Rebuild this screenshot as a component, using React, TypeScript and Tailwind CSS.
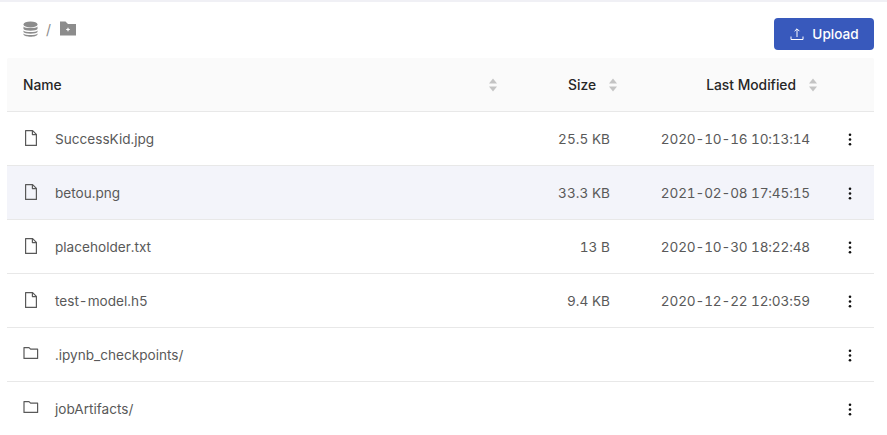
const rows = [
  { name: "SuccessKid.jpg", size: "25.5 KB", date: "2020-10-16 10:13:14", type: "file" },
  { name: "betou.png", size: "33.3 KB", date: "2021-02-08 17:45:15", type: "file", hover: true },
  { name: "placeholder.txt", size: "13 B", date: "2020-10-30 18:22:48", type: "file" },
  { name: "test-model.h5", size: "9.4 KB", date: "2020-12-22 12:03:59", type: "file" },
  { name: ".ipynb_checkpoints/", size: "", date: "", type: "folder" },
  { name: "jobArtifacts/", size: "", date: "", type: "folder" },
];

function SortIcon() {
  return (
    <svg width="10" height="14" viewBox="0 0 10 14" className="shrink-0">
      <path d="M5 0.5 L9 5.5 H1 Z" fill="#c4c4c4" />
      <path d="M5 13.5 L9 8.5 H1 Z" fill="#c4c4c4" />
    </svg>
  );
}

function FileIcon() {
  return (
    <svg width="16" height="18" viewBox="0 0 16 18" fill="none" stroke="#595959" strokeWidth="1.2" strokeLinejoin="round" className="shrink-0">
      <path d="M2.6 1.6 H9.6 L13.4 5.4 V16.4 H2.6 Z" />
      <path d="M9.4 1.6 V5.6 H13.4" />
    </svg>
  );
}

function FolderIcon() {
  return (
    <svg width="16" height="14" viewBox="0 0 16 14" fill="none" stroke="#595959" strokeWidth="1.2" strokeLinejoin="round" className="mb-[2px] shrink-0">
      <path d="M1 1.6 H6 L7.6 3.2 H14.6 V12.4 H1 Z" />
    </svg>
  );
}

function Dots() {
  return (
    <svg width="4" height="13" viewBox="0 0 4 13" fill="#111" className="mt-[2px] shrink-0">
      <circle cx="2" cy="1.8" r="1.3" />
      <circle cx="2" cy="6.5" r="1.3" />
      <circle cx="2" cy="11.2" r="1.3" />
    </svg>
  );
}

export default function App() {
  return (
    <div className="h-[435px] w-[887px] overflow-hidden bg-white font-['Inter',sans-serif] text-[13.6px]">
      <div className="h-[2px] bg-[#f0f0f5]" />
      <div className="flex h-[56px] items-start justify-between pl-[23px] pr-[13px]">
        <div className="mt-[19px] flex items-center gap-[8px] text-[#8c8c8c]">
          <svg width="15" height="17" viewBox="0 0 15 17" fill="#8c8c8c">
            <ellipse cx="7.5" cy="3.4" rx="7" ry="3" />
            <path d="M0.5 5.4 C1.5 7.4 13.5 7.4 14.5 5.4 V8 C13.5 10.2 1.5 10.2 0.5 8 Z" />
            <path d="M0.5 9.4 C1.5 11.4 13.5 11.4 14.5 9.4 V11 C13.5 13.2 1.5 13.2 0.5 11 Z" />
            <path d="M0.5 12.4 C1.5 14.4 13.5 14.4 14.5 12.4 V13.6 C13.5 16.6 1.5 16.6 0.5 13.6 Z" />
          </svg>
          <span className="text-sm leading-none">/</span>
          <svg width="16" height="15" viewBox="0 0 16 15" className="mb-[2px] ml-[1px]">
            <path d="M0 0.5 H5.5 L8 3 H16 V14.5 H0 Z" fill="#8c8c8c" />
            <path d="M6.2 8.5 H9.8 M8 6.7 V10.3" stroke="#fff" strokeWidth="1.2" />
          </svg>
        </div>
        <button className="mt-[16px] flex h-[32px] w-[100px] items-center justify-center gap-[8px] rounded-[4px] bg-[#3859bc] pl-[1px] font-medium text-white">
          <svg width="14" height="14" viewBox="0 0 14 14" fill="none" stroke="#fff" strokeWidth="1">
            <path d="M7 10 V2 M4.6 4.2 L7 1.8 L9.4 4.2" />
            <path d="M1 9.5 V12.5 H13 V9.5" />
          </svg>
          Upload
        </button>
      </div>
      <div className="mx-[7px] w-[867px]">
        <div className="flex h-[54px] items-center rounded-t-[2px] border-b border-[#e8e8e8] bg-[#fafafa] text-[13.8px] font-medium text-[#262626]">
          <div className="flex w-[503px] items-center justify-between pl-4 pr-[12px]">
            <span className="pt-[2px]">Name</span>
            <SortIcon />
          </div>
          <div className="flex w-[116px] items-center justify-end gap-[12px] pr-[8px]">
            <span className="pt-[2px]">Size</span>
            <SortIcon />
          </div>
          <div className="flex w-[200px] items-center justify-end gap-[12px] pr-[8px]">
            <span className="pt-[2px]">Last Modified</span>
            <SortIcon />
          </div>
        </div>
        {rows.map((row) => (
          <div
            key={row.name}
            className={`flex h-[54px] items-center border-b border-[#e8e8e8] text-[#595959] tabular-nums ${row.hover ? "bg-[#f3f4fa]" : ""}`}
          >
            <div className="flex w-[503px] items-center pl-4">
              <span className="flex w-[32px] items-center">
                {row.type === "file" ? <FileIcon /> : <FolderIcon />}
              </span>
              <span className="pt-[2px]">{row.name}</span>
            </div>
            <div className="w-[116px] pr-[16px] pt-[2px] text-right tracking-[0.02px]">{row.size}</div>
            <div className="w-[200px] pr-[16px] pt-[2px] text-right tracking-[-0.15px]">{row.date}</div>
            <div className="flex flex-1 justify-center">
              <Dots />
            </div>
          </div>
        ))}
      </div>
    </div>
  );
}
